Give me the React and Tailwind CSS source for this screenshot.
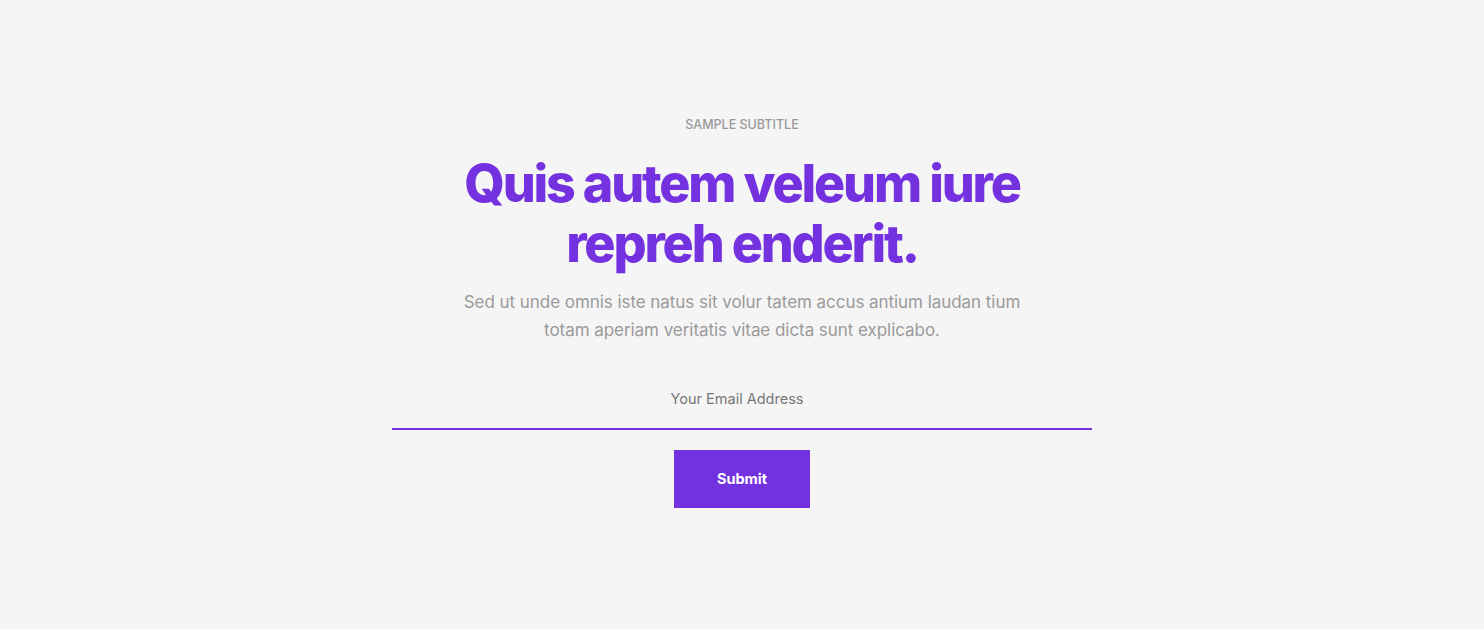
import React from 'react';

export default function App() {
  return (
    <div className="min-h-screen bg-[#f5f5f5] flex justify-center" style={{ fontFamily: 'Inter, "Noto Sans", sans-serif' }}>
      <div className="w-[700px] flex flex-col items-center pt-[117px]">
        {/* Heading block */}
        <p className="text-[12.5px] leading-4 uppercase text-[#999999] font-medium">Sample Subtitle</p>
        <h1 className="mt-[21px] text-center text-[52px] leading-[60px] font-extrabold tracking-[-0.042em] text-[#7431df]">
          Quis autem veleum iure
          <br />
          repreh enderit.
        </h1>
        <p className="mt-[14px] text-center text-[17px] leading-[28px] text-[#9a9a9a] tracking-[-0.003em]">
          Sed ut unde omnis iste natus sit volur tatem accus antium laudan tium
          <br />
          totam aperiam veritatis vitae dicta sunt explicabo.
        </p>

        {/* Form */}
        <form className="w-full mt-[41px] flex flex-col items-center" onSubmit={(e) => e.preventDefault()}>
          <input
            type="email"
            placeholder="Your Email Address"
            className="w-full h-[45px] pb-[17px] pr-[10px] bg-transparent text-center text-[14.5px] text-[#555] placeholder:text-[#777] border-b-2 border-[#7431df] outline-none"
          />
          <button
            type="submit"
            className="mt-[20px] w-[136px] h-[58px] bg-[#7431df] text-white text-[14.5px] font-bold"
          >
            Submit
          </button>
        </form>
      </div>
    </div>
  );
}
